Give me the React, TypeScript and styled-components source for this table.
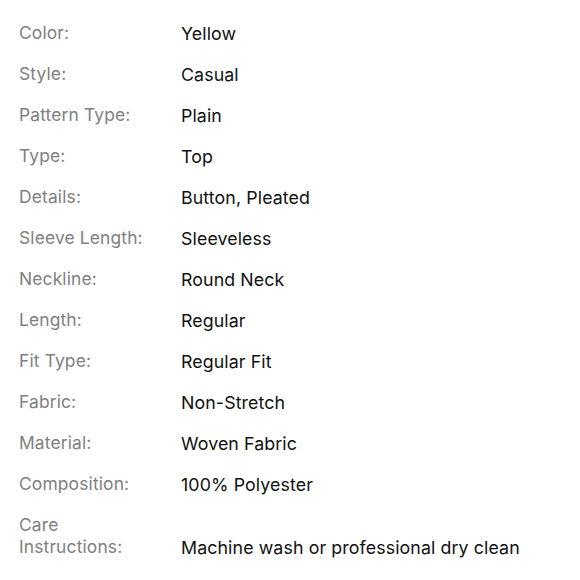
import React from "react";
import styled, { createGlobalStyle } from "styled-components";

const Global = createGlobalStyle`
  html, body { margin: 0; padding: 0; background: #ffffff; }
  body { font-family: Inter, "Noto Sans", "Liberation Sans", sans-serif; -webkit-font-smoothing: antialiased; }
`;

const Table = styled.div`
  display: grid;
  grid-template-columns: 162px 1fr;
  row-gap: 19px;
  align-items: end;
  padding: 23px 0 0 19px;
`;

const Label = styled.div`
  font-size: 17.4px;
  line-height: 22px;
  font-weight: 400;
  color: #808080;
  letter-spacing: 0.15px;
  position: relative;
  top: -1px;
`;

const Value = styled.div`
  font-size: 17.8px;
  line-height: 22px;
  color: #111111;
  letter-spacing: 0.1px;
`;

const rows: [React.ReactNode, string][] = [
  ["Color:", "Yellow"],
  ["Style:", "Casual"],
  ["Pattern Type:", "Plain"],
  ["Type:", "Top"],
  ["Details:", "Button, Pleated"],
  ["Sleeve Length:", "Sleeveless"],
  ["Neckline:", "Round Neck"],
  ["Length:", "Regular"],
  ["Fit Type:", "Regular Fit"],
  ["Fabric:", "Non-Stretch"],
  ["Material:", "Woven Fabric"],
  ["Composition:", "100% Polyester"],
  [<>Care<br />Instructions:</>, "Machine wash or professional dry clean"],
];

export default function App() {
  return (
    <>
      <Global />
      <Table>
        {rows.map(([l, v], i) => (
          <React.Fragment key={i}>
            <Label>{l}</Label>
            <Value>{v}</Value>
          </React.Fragment>
        ))}
      </Table>
    </>
  );
}
